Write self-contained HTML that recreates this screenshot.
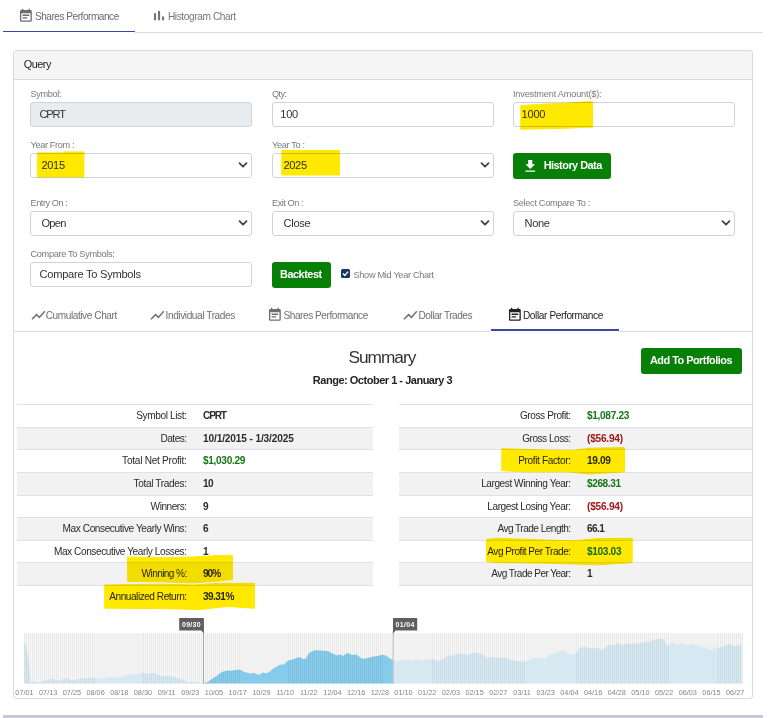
<!DOCTYPE html>
<html lang="en"><head>
<meta charset="utf-8">
<title>Seasonality Backtest - Dollar Performance</title>
<style>
*{box-sizing:border-box}
html,body{margin:0;padding:0}
body{width:774px;height:718px;position:relative;overflow:hidden;background:#fff;
  font-family:"Liberation Sans",sans-serif;font-size:10.5px;color:#333;-webkit-font-smoothing:antialiased}
ul{list-style:none;margin:0;padding:0}
.abs{position:absolute}
svg.ic{display:block;position:absolute;fill:currentColor}

/* ---------- top tabs ---------- */
.toptabs{position:absolute;left:3px;top:0;width:760px;height:33px;border-bottom:1px solid #dcdcdc}
.toptabs li{position:absolute;top:0;height:33px;color:#757575;font-size:10.1px;white-space:nowrap}
.toptabs li.on{left:0;width:132px;height:32px;border-bottom:1px solid #3848ad;color:#6b6b6b;box-shadow:0 1px 0 #fff}
.toptabs li span{position:absolute;top:11px;line-height:12px}

/* ---------- card ---------- */
.card{position:absolute;left:13px;top:50px;width:740px;height:649px;border:1px solid #dadada;border-radius:3px;background:#fff}
.card-h{position:absolute;left:0;top:0;right:0;height:29px;background:#f5f5f5;border-bottom:1px solid #dadada;border-radius:2px 2px 0 0}
.card-h span{position:absolute;left:9.8px;top:6px;font-size:10.9px;line-height:14px;color:#222}

/* form */
.lbl{position:absolute;font-size:9.2px;line-height:10px;color:#7a7a7a;white-space:nowrap;letter-spacing:-0.25px}
.inp{position:absolute;height:25px;width:222px;border:1px solid #ced4da;border-radius:3px;background:#fff;
  font:inherit;font-size:11.1px;color:#333;padding:0 0 2px 8.5px;margin:0;outline:0}
.inp.dis{background:#e9ecef}
.sel{position:absolute;height:25px;width:222px;border:1px solid #ced4da;border-radius:3px;background:#fff}
.sel select{appearance:none;-webkit-appearance:none;border:0;background:transparent;width:100%;height:100%;
  font:inherit;font-size:11.1px;color:#333;padding:0 0 2px 10.5px;margin:0;outline:0}
.sel svg.chev{position:absolute;right:3.5px;top:8px;width:10px;height:6px}
.btn{position:absolute;background:#088008;color:#fff;border:0;border-radius:3px;font:inherit;font-weight:bold;
  font-size:10.9px;letter-spacing:-0.45px;white-space:nowrap;padding:0;margin:0}
.chk{position:absolute;left:341px;top:269px;width:9px;height:9px;background:#1a3662;border-radius:1.5px}
.chk svg{position:absolute;left:0;top:0;width:9px;height:9px}

/* inner tabs */
.intabs{position:absolute;left:14px;top:297px;width:738px;height:34px;border-bottom:1px solid #dcdcdc}
.intabs li{position:absolute;top:0;height:34px;color:#6f6f6f;font-size:10.1px;white-space:nowrap}
.intabs li.on{color:#222;border-bottom:2px solid #3848ad;box-shadow:0 1px 0 #fff}
.intabs li span{position:absolute;top:12px;line-height:12px}

/* summary */
.title{position:absolute;left:0;width:763.8px;text-align:center;top:346px;font-size:17.3px;line-height:22px;color:#333}
.range-t{position:absolute;left:0;width:765px;text-align:center;top:373px;font-size:11px;line-height:14px;font-weight:bold;color:#222}
table.sum{position:absolute;top:404px;border-collapse:collapse;table-layout:fixed;font-size:10.1px}
table.sum td{height:23px;padding:4.7px 0 0 0;border-top:1px solid #dee2e6;white-space:nowrap;line-height:12px;vertical-align:top}
table.sum tr:nth-child(2) td,table.sum tr:nth-child(5) td,table.sum tr:nth-child(7) td{height:22px}
table.sum tr:nth-child(even) td{background:#f2f2f2}
table.sum td.l{text-align:right;padding-right:8.4px;color:#2b2b2b}
table.sum td.v{text-align:left;padding-left:8px;font-weight:bold;color:#2b2b2b}
table.sum td.g{color:#167516}
table.sum td.r{color:#a01818}
table.lt{left:17px;width:356px}
table.lt td.l{width:178px}
table.rt{left:399px;width:353px;border-bottom:1px solid #dee2e6}
table.rt td.l{width:180px}

/* highlighter strokes */
svg.hl{position:absolute;left:0;top:0;width:774px;height:718px;mix-blend-mode:multiply;pointer-events:none}

/* range selector */
svg.range{position:absolute;left:0;top:615px}
svg.range text.ax{font-family:"Liberation Sans",sans-serif;font-size:7.3px;fill:#858585}
svg.range text.mk{font-family:"Liberation Sans",sans-serif;font-size:7px;font-weight:bold;fill:#fff;letter-spacing:0.3px}

.bottombar{position:absolute;left:3px;top:715px;width:760px;height:3px;background:#c7cad6}
svg.ic{width:15.75px;height:15.75px}

</style>
</head>
<body>
<ul class="toptabs">
  <li class="on"><svg class="ic" style="left:15.2px;top:7.8px" viewBox="0 0 24 24"><path d="M17 10H7v2h10v-2zm2-7h-1V1h-2v2H8V1H6v2H5c-1.11 0-1.99.9-1.99 2L3 19c0 1.1.89 2 2 2h14c1.1 0 2-.9 2-2V5c0-1.1-.9-2-2-2zm0 16H5V8h14v11zm-5-5H7v2h7v-2z"></path></svg><span style="left: 31.9px; letter-spacing: -0.482px;">Shares Performance</span></li>
  <li style="left:135px;width:120px"><svg class="ic" style="left:16.3px;top:11.2px;width:11px;height:10px" viewBox="0 0 11 10"><path d="M0 2.2h2.1v7.1H0zM4 0h2.1v9.3H4zM8 5.6h2.1v3.7H8z"></path></svg><span style="left: 29.9px; letter-spacing: -0.379px;">Histogram Chart</span></li>
</ul>

<div class="card">
  <div class="card-h"><span style="letter-spacing: -0.514px;">Query</span></div>
  <div class="abs" style="left:-14px;top:-51px;width:774px;height:718px">

    <label class="lbl" style="left: 30.5px; top: 89px; letter-spacing: -0.386px;">Symbol:</label>
    <input class="inp dis" style="left: 30px; top: 102px; letter-spacing: -1.175px;" type="text" value="CPRT" disabled="">
    <label class="lbl" style="left: 272px; top: 89px; letter-spacing: -0.615px;">Qty:</label>
    <input class="inp" style="left: 272px; top: 102px; padding-left: 7.3px; letter-spacing: -0.27px;" type="text" value="100">
    <label class="lbl" style="left: 513px; top: 89px; letter-spacing: -0.192px;">Investment Amount($):</label>
    <input class="inp" style="left: 513px; top: 102px; padding-left: 7.6px; letter-spacing: -0.27px;" type="text" value="1000">

    <label class="lbl" style="left: 30.5px; top: 140px; letter-spacing: -0.36px;">Year From :</label>
    <div class="sel" style="left:30px;top:153px"><select style="letter-spacing: -0.37px;"><option>2015</option></select><svg class="chev" viewBox="0 0 10 6"><path d="M1.5 1.1l3.5 3.6 3.5-3.6" fill="none" stroke="#3d434b" stroke-width="1.75" stroke-linecap="round" stroke-linejoin="round"></path></svg></div>
    <label class="lbl" style="left: 272px; top: 140px; letter-spacing: -0.341px;">Year To :</label>
    <div class="sel" style="left:272px;top:153px"><select style="letter-spacing: -0.37px;"><option>2025</option></select><svg class="chev" viewBox="0 0 10 6"><path d="M1.5 1.1l3.5 3.6 3.5-3.6" fill="none" stroke="#3d434b" stroke-width="1.75" stroke-linecap="round" stroke-linejoin="round"></path></svg></div>
    <button class="btn" style="left:513px;top:153px;width:98px;height:26px"><svg class="ic" style="left:9.1px;top:4.9px;width:16.5px;height:16.5px" viewBox="0 0 24 24"><path d="M19 9h-4V3H9v6H5l7 7 7-7zM5 18v2h14v-2H5z"></path></svg><span class="abs" style="left: 30.7px; top: 5px; line-height: 14px; letter-spacing: -0.505px;">History Data</span></button>

    <label class="lbl" style="left: 30.5px; top: 198px; letter-spacing: -0.466px;">Entry On :</label>
    <div class="sel" style="left:30px;top:211px"><select style="letter-spacing: -0.76px;"><option>Open</option></select><svg class="chev" viewBox="0 0 10 6"><path d="M1.5 1.1l3.5 3.6 3.5-3.6" fill="none" stroke="#3d434b" stroke-width="1.75" stroke-linecap="round" stroke-linejoin="round"></path></svg></div>
    <label class="lbl" style="left: 272px; top: 198px; letter-spacing: -0.47px;">Exit On :</label>
    <div class="sel" style="left:272px;top:211px"><select style="letter-spacing: -0.293px;"><option>Close</option></select><svg class="chev" viewBox="0 0 10 6"><path d="M1.5 1.1l3.5 3.6 3.5-3.6" fill="none" stroke="#3d434b" stroke-width="1.75" stroke-linecap="round" stroke-linejoin="round"></path></svg></div>
    <label class="lbl" style="left: 513px; top: 198px; letter-spacing: -0.32px;">Select Compare To :</label>
    <div class="sel" style="left:513px;top:211px"><select style="letter-spacing: -0.38px;"><option>None</option></select><svg class="chev" viewBox="0 0 10 6"><path d="M1.5 1.1l3.5 3.6 3.5-3.6" fill="none" stroke="#3d434b" stroke-width="1.75" stroke-linecap="round" stroke-linejoin="round"></path></svg></div>

    <label class="lbl" style="left: 30.5px; top: 249px; letter-spacing: -0.327px;">Compare To Symbols:</label>
    <input class="inp" style="left: 30px; top: 262px; letter-spacing: -0.253px;" type="text" value="Compare To Symbols">
    <button class="btn" style="left:272px;top:262px;width:59px;height:26px"><span class="abs" style="left: 8px; top: 5px; line-height: 14px; letter-spacing: -0.463px;">Backtest</span></button>
    <span class="chk"><svg viewBox="0 0 9 9"><path d="M2 4.6l1.8 1.8L7.1 2.6" fill="none" stroke="#fff" stroke-width="1.4"></path></svg></span>
    <label class="lbl" style="left: 353.5px; top: 269.5px; font-size: 9.2px; letter-spacing: -0.316px;">Show Mid Year Chart</label>

    <ul class="intabs" style="left:14px;top:298px">
      <li style="left:0;width:120px"><svg class="ic" style="left:15.7px;top:8.85px;width:16.7px;height:16.7px" viewBox="0 0 24 24"><path d="M3.5 18.49l6-6.01 4 4L22 6.92l-1.41-1.41-7.09 7.97-4-4L2 16.99z"></path></svg><span style="left: 31.7px; letter-spacing: -0.424px;">Cumulative Chart</span></li>
      <li style="left:120px;width:118px"><svg class="ic" style="left:15.4px;top:8.85px;width:16.7px;height:16.7px" viewBox="0 0 24 24"><path d="M3.5 18.49l6-6.01 4 4L22 6.92l-1.41-1.41-7.09 7.97-4-4L2 16.99z"></path></svg><span style="left: 31.6px; letter-spacing: -0.418px;">Individual Trades</span></li>
      <li style="left:238px;width:134px"><svg class="ic" style="left:14.9px;top:8.9px" viewBox="0 0 24 24"><path d="M17 10H7v2h10v-2zm2-7h-1V1h-2v2H8V1H6v2H5c-1.11 0-1.99.9-1.99 2L3 19c0 1.1.89 2 2 2h14c1.1 0 2-.9 2-2V5c0-1.1-.9-2-2-2zm0 16H5V8h14v11zm-5-5H7v2h7v-2z"></path></svg><span style="left: 31.5px; letter-spacing: -0.46px;">Shares Performance</span></li>
      <li style="left:372px;width:105px"><svg class="ic" style="left:16.4px;top:8.85px;width:16.7px;height:16.7px" viewBox="0 0 24 24"><path d="M3.5 18.49l6-6.01 4 4L22 6.92l-1.41-1.41-7.09 7.97-4-4L2 16.99z"></path></svg><span style="left: 32.5px; letter-spacing: -0.502px;">Dollar Trades</span></li>
      <li class="on" style="left:477px;width:128px;height:33px"><svg class="ic" style="left:15.9px;top:8.9px" viewBox="0 0 24 24"><path d="M17 10H7v2h10v-2zm2-7h-1V1h-2v2H8V1H6v2H5c-1.11 0-1.99.9-1.99 2L3 19c0 1.1.89 2 2 2h14c1.1 0 2-.9 2-2V5c0-1.1-.9-2-2-2zm0 16H5V8h14v11zm-5-5H7v2h7v-2z"></path></svg><span style="left: 31.9px; letter-spacing: -0.381px;">Dollar Performance</span></li>
    </ul>

    <div class="title" style="letter-spacing: -1.005px;">Summary</div>
    <div class="range-t" style="letter-spacing: -0.483px;">Range: October 1 - January 3</div>
    <button class="btn" style="left:641px;top:348px;width:101px;height:26px"><span class="abs" style="left: 9px; top: 5px; line-height: 14px; letter-spacing: -0.503px;">Add To Portfolios</span></button>

    <table class="sum lt"><tbody>
<tr><td class="l" style="letter-spacing: -0.382px;">Symbol List:</td><td class="v " style="letter-spacing: -1.146px;">CPRT</td></tr>
<tr><td class="l" style="letter-spacing: -0.498px;">Dates:</td><td class="v " style="letter-spacing: -0.124px;">10/1/2015 - 1/3/2025</td></tr>
<tr><td class="l" style="letter-spacing: -0.265px;">Total Net Profit:</td><td class="v g" style="letter-spacing: -0.323px;">$1,030.29</td></tr>
<tr><td class="l" style="letter-spacing: -0.361px;">Total Trades:</td><td class="v " style="letter-spacing: -0.567px;">10</td></tr>
<tr><td class="l" style="letter-spacing: -0.479px;">Winners:</td><td class="v ">9</td></tr>
<tr><td class="l" style="letter-spacing: -0.42px;">Max Consecutive Yearly Wins:</td><td class="v ">6</td></tr>
<tr><td class="l" style="letter-spacing: -0.421px;">Max Consecutive Yearly Losses:</td><td class="v ">1</td></tr>
<tr><td class="l" style="letter-spacing: -0.606px;">Winning %:</td><td class="v " style="letter-spacing: -1.001px;">90%</td></tr>
<tr><td class="l" style="letter-spacing: -0.476px;">Annualized Return:</td><td class="v " style="letter-spacing: -0.572px;">39.31%</td></tr>
</tbody></table>
    <table class="sum rt"><tbody>
<tr><td class="l" style="letter-spacing: -0.415px;">Gross Profit:</td><td class="v g" style="letter-spacing: -0.323px;">$1,087.23</td></tr>
<tr><td class="l" style="letter-spacing: -0.496px;">Gross Loss:</td><td class="v r" style="letter-spacing: -0.214px;">($56.94)</td></tr>
<tr><td class="l" style="letter-spacing: -0.384px;">Profit Factor:</td><td class="v " style="letter-spacing: -0.353px;">19.09</td></tr>
<tr><td class="l" style="letter-spacing: -0.446px;">Largest Winning Year:</td><td class="v g" style="letter-spacing: -0.414px;">$268.31</td></tr>
<tr><td class="l" style="letter-spacing: -0.437px;">Largest Losing Year:</td><td class="v r" style="letter-spacing: -0.214px;">($56.94)</td></tr>
<tr><td class="l" style="letter-spacing: -0.536px;">Avg Trade Length:</td><td class="v " style="letter-spacing: -0.564px;">66.1</td></tr>
<tr><td class="l" style="letter-spacing: -0.486px;">Avg Profit Per Trade:</td><td class="v g" style="letter-spacing: -0.329px;">$103.03</td></tr>
<tr><td class="l" style="letter-spacing: -0.572px;">Avg Trade Per Year:</td><td class="v ">1</td></tr>
</tbody></table>

    <svg class="range" width="774" height="100" viewBox="0 615 774 100">
<defs><pattern id="tk" x="0" y="0" width="2" height="10" patternUnits="userSpaceOnUse"><rect x="0" y="0" width="1" height="10" fill="#000" fill-opacity="0.068"></rect></pattern></defs>
<rect x="24.0" y="633.0" width="719.0" height="50.5" fill="#f1f1f1"></rect>
<rect x="24" y="633.0" width="72" height="50.5" fill="#f9f9f9"></rect>
<rect x="143" y="633.0" width="97" height="50.5" fill="#f9f9f9"></rect>
<rect x="288" y="633.0" width="96" height="50.5" fill="#f9f9f9"></rect>
<rect x="432" y="633.0" width="94" height="50.5" fill="#f9f9f9"></rect>
<rect x="576" y="633.0" width="94" height="50.5" fill="#f9f9f9"></rect>
<rect x="718" y="633.0" width="25" height="50.5" fill="#f9f9f9"></rect>
<path d="M24.3 683.5L24.3 641.9L26.0 645.0L28.5 658.7L30.5 682.2L35.2 681.8L40.2 682.2L43.6 680.8L52.0 678.8L58.7 680.8L67.1 678.2L72.2 680.5L80.5 678.5L94.0 677.8L97.3 678.8L104.0 678.2L110.8 677.1L120.9 677.5L129.2 674.1L132.6 675.5L136.7 674.1L143.4 673.1L146.8 673.4L153.5 672.9L156.9 674.6L163.6 676.3L172.0 676.3L177.0 678.0L183.7 680.2L187.9 682.2L193.8 681.7L197.2 682.2L203.4 683.0L203.4 683.5Z" fill="#cae4f1" fill-opacity="0.7"></path>
<path d="M393.0 683.5L393.0 660.0L396.9 661.7L400.2 660.0L407.0 659.7L412.0 660.7L417.0 660.0L422.1 660.7L428.8 659.0L432.5 659.0L437.2 661.2L443.9 658.7L448.9 655.3L452.3 656.0L457.3 654.0L462.4 653.3L467.4 655.3L475.0 652.3L480.9 654.0L487.6 657.7L492.6 656.7L496.7 657.7L504.3 657.3L508.5 659.0L515.2 660.7L523.6 661.7L530.3 659.5L534.5 657.7L540.4 658.3L545.4 659.0L548.8 655.3L557.2 652.6L563.1 649.9L566.4 651.9L570.6 655.0L575.7 653.6L579.9 647.8L584.0 646.9L590.8 648.3L599.2 648.3L602.5 650.3L609.2 644.6L614.3 645.2L617.6 642.7L621.8 645.2L628.5 643.2L632.7 643.9L640.2 642.9L645.3 642.5L653.7 639.9L662.1 638.2L664.6 640.2L666.3 646.1L672.1 641.9L677.2 644.4L680.5 643.6L687.3 645.2L692.3 643.9L697.3 645.2L702.4 647.8L704.9 646.9L709.1 649.9L714.1 648.3L720.9 646.9L729.3 644.0L734.3 646.1L741.6 644.4L741.6 683.5Z" fill="#cae4f1" fill-opacity="0.7"></path>
<path d="M203.4 683.5L203.4 683.0L207.3 682.2L210.6 679.7L217.3 675.5L221.5 672.1L227.4 670.4L230.8 670.8L237.5 669.8L240.8 670.1L244.2 672.1L250.9 673.4L254.2 673.1L258.4 675.0L263.4 672.4L266.0 673.4L268.5 672.4L273.5 668.4L280.2 664.5L283.6 664.7L287.8 660.7L293.7 659.0L299.5 657.0L303.7 659.3L306.3 658.3L309.1 652.8L314.7 650.3L320.5 650.6L327.3 650.9L332.3 653.3L336.5 655.6L339.9 654.6L343.2 656.0L347.4 653.0L352.5 655.0L355.8 654.3L362.5 659.0L367.6 658.0L374.3 656.3L376.7 656.3L381.8 654.8L386.0 655.6L390.2 658.7L393.0 660.0L393.0 683.5Z" fill="#61beea" fill-opacity="0.75"></path>
<g transform="translate(24 0)"><rect x="0" y="633.0" width="72" height="50.5" fill="url(#tk)"></rect></g>
<g transform="translate(143 0)"><rect x="0" y="633.0" width="97" height="50.5" fill="url(#tk)"></rect></g>
<g transform="translate(288 0)"><rect x="0" y="633.0" width="96" height="50.5" fill="url(#tk)"></rect></g>
<g transform="translate(432 0)"><rect x="0" y="633.0" width="94" height="50.5" fill="url(#tk)"></rect></g>
<g transform="translate(576 0)"><rect x="0" y="633.0" width="94" height="50.5" fill="url(#tk)"></rect></g>
<g transform="translate(718 0)"><rect x="0" y="633.0" width="25" height="50.5" fill="url(#tk)"></rect></g>
<rect x="203" y="631" width="1" height="52.5" fill="#a8a8a8"></rect>
<rect x="392.6" y="631" width="1.2" height="52.5" fill="#c4c4c4"></rect>
<path d="M179.2 618H203.9V633.4L201.2 630.6H179.2Z" fill="#5f5f5f"></path>
<path d="M393 618H417.2V630.6H395.7L393 633.4Z" fill="#5f5f5f"></path>
<text class="mk" x="191.5" y="627" text-anchor="middle">09/30</text>
<text class="mk" x="405.1" y="627" text-anchor="middle">01/04</text>
<text class="ax" x="24.5" y="695.2" text-anchor="middle">07/01</text>
<text class="ax" x="48.2" y="695.2" text-anchor="middle">07/13</text>
<text class="ax" x="71.9" y="695.2" text-anchor="middle">07/25</text>
<text class="ax" x="95.6" y="695.2" text-anchor="middle">08/06</text>
<text class="ax" x="119.3" y="695.2" text-anchor="middle">08/18</text>
<text class="ax" x="142.9" y="695.2" text-anchor="middle">08/30</text>
<text class="ax" x="166.6" y="695.2" text-anchor="middle">09/11</text>
<text class="ax" x="190.3" y="695.2" text-anchor="middle">09/23</text>
<text class="ax" x="214.0" y="695.2" text-anchor="middle">10/05</text>
<text class="ax" x="237.7" y="695.2" text-anchor="middle">10/17</text>
<text class="ax" x="261.4" y="695.2" text-anchor="middle">10/29</text>
<text class="ax" x="285.1" y="695.2" text-anchor="middle">11/10</text>
<text class="ax" x="308.8" y="695.2" text-anchor="middle">11/22</text>
<text class="ax" x="332.5" y="695.2" text-anchor="middle">12/04</text>
<text class="ax" x="356.2" y="695.2" text-anchor="middle">12/16</text>
<text class="ax" x="379.9" y="695.2" text-anchor="middle">12/28</text>
<text class="ax" x="403.5" y="695.2" text-anchor="middle">01/10</text>
<text class="ax" x="427.2" y="695.2" text-anchor="middle">01/22</text>
<text class="ax" x="450.9" y="695.2" text-anchor="middle">02/03</text>
<text class="ax" x="474.6" y="695.2" text-anchor="middle">02/15</text>
<text class="ax" x="498.3" y="695.2" text-anchor="middle">02/27</text>
<text class="ax" x="522.0" y="695.2" text-anchor="middle">03/11</text>
<text class="ax" x="545.7" y="695.2" text-anchor="middle">03/23</text>
<text class="ax" x="569.4" y="695.2" text-anchor="middle">04/04</text>
<text class="ax" x="593.1" y="695.2" text-anchor="middle">04/16</text>
<text class="ax" x="616.8" y="695.2" text-anchor="middle">04/28</text>
<text class="ax" x="640.4" y="695.2" text-anchor="middle">05/10</text>
<text class="ax" x="664.1" y="695.2" text-anchor="middle">05/22</text>
<text class="ax" x="687.8" y="695.2" text-anchor="middle">06/03</text>
<text class="ax" x="711.5" y="695.2" text-anchor="middle">06/15</text>
<text class="ax" x="735.2" y="695.2" text-anchor="middle">06/27</text>
</svg>

    <svg class="hl" viewBox="0 0 774 718">
      <g fill="#ffe900" stroke="#ffe900" stroke-width="1" stroke-linejoin="round">
        <path d="M520.8 105.6L547.6 103.9L569 103.2L584.6 101.9L592.4 101.8L592.6 127L569 128.1L547.6 128.7L520.8 129.2Z"></path>
        <path d="M37.6 152.9L62.8 152.9L63.6 151.9L83.9 151.9L83.9 176.9L37.6 176.9Z"></path>
        <path d="M281.8 150.5L339.5 150.5L339.5 175L281.8 175Z"></path>
        <path d="M501.8 448.7L545.9 450L572.2 450.4L589.8 448.2L624.5 447.6L624.5 471.8L589.8 474L567.9 471.8L523.9 471.8L501.8 470.7Z"></path>
        <path d="M486.5 539.5L497 538.2L540.9 539.9L573.8 540.8L598 538.6L632.2 538.2L632.2 562.6L598 564.8L573.8 564L540.9 563.1L497 562.6L486.5 561.5Z"></path>
        <path d="M127.6 556.9L160.9 557.8L193.8 556.9L218 555.6L232.4 555.6L232.4 579.6L218 581L193.8 582.9L160.9 581.8L127.6 581.4Z"></path>
        <path d="M104.7 585L160.9 584.2L193.8 585L218 583.3L254.4 583.3L254.4 608.2L226.8 606.4L200.4 609.5L160.9 608.6L104.7 608.2Z"></path>
      </g>
    </svg>
  </div>
</div>
<div class="bottombar"></div>



</body></html>
